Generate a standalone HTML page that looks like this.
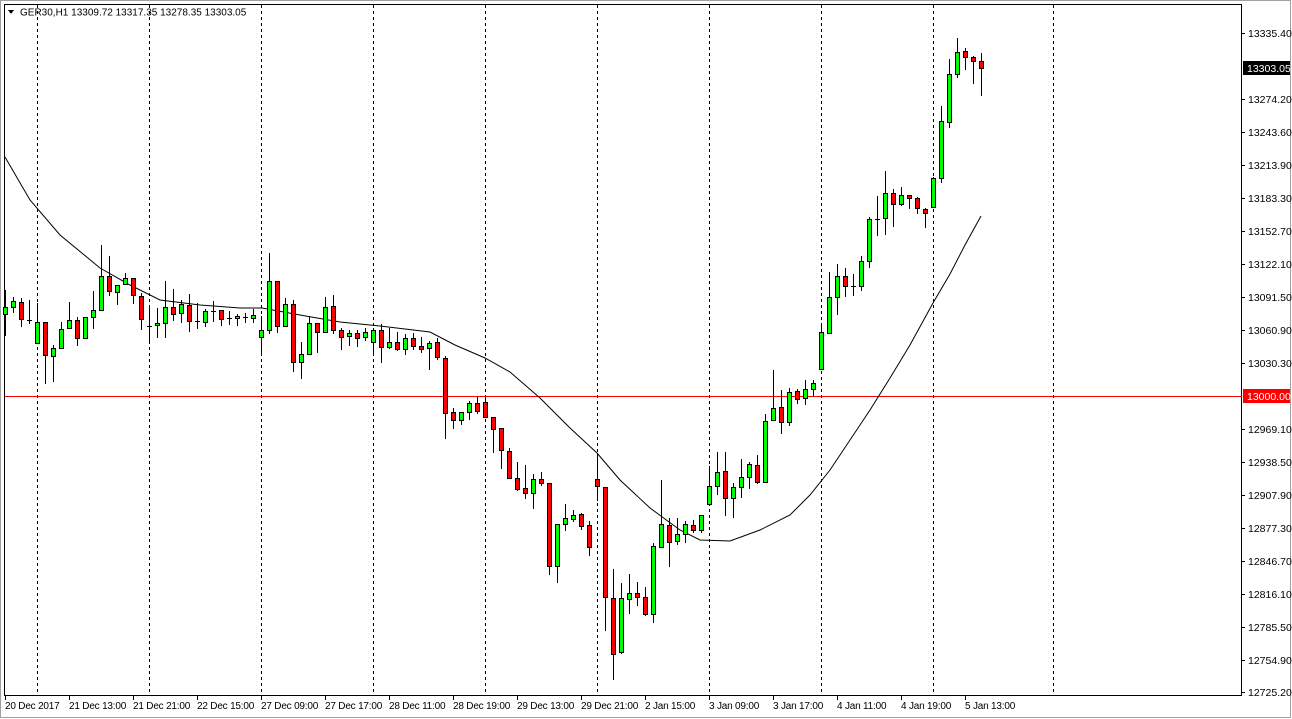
<!DOCTYPE html>
<html><head><meta charset="utf-8"><style>
html,body{margin:0;padding:0;background:#fff;width:1292px;height:719px;overflow:hidden}
svg{display:block}
text{font-family:"Liberation Sans",sans-serif;font-size:10.5px;fill:#000}
.t text{font-size:10px;letter-spacing:-0.2px}
</style></head><body>
<svg id="s" width="1292" height="719" viewBox="0 0 1292 719" xmlns="http://www.w3.org/2000/svg" shape-rendering="crispEdges">
<rect x="0" y="0" width="1292" height="719" fill="#fff"/>
<rect x="0.5" y="0.5" width="1290" height="717" fill="none" stroke="#a0a0a0"/>
<rect x="4.5" y="4.5" width="1237" height="691" fill="none" stroke="#000"/>
<g stroke="#000" stroke-dasharray="3,3">
<line x1="37.5" y1="5" x2="37.5" y2="695"/><line x1="149.5" y1="5" x2="149.5" y2="695"/>
<line x1="261.5" y1="5" x2="261.5" y2="695"/><line x1="373.5" y1="5" x2="373.5" y2="695"/>
<line x1="485.5" y1="5" x2="485.5" y2="695"/><line x1="597.5" y1="5" x2="597.5" y2="695"/>
<line x1="709.5" y1="5" x2="709.5" y2="695"/><line x1="821.5" y1="5" x2="821.5" y2="695"/>
<line x1="933.5" y1="5" x2="933.5" y2="695"/><line x1="1053.5" y1="5" x2="1053.5" y2="695"/>
</g>
<line x1="5" y1="396.5" x2="1242" y2="396.5" stroke="#ff0000"/>
<polyline fill="none" stroke="#000" stroke-width="1" shape-rendering="auto" points="5,157 30,200 60,235 100,268 130,285 160,300 200,305 240,308 262,308 300,315 340,322 380,326 430,332 455,345 485,358 510,372 540,398 570,428 597,453 620,480 650,508 680,530 700,540 730,541 760,530 790,515 810,495 830,470 850,440 870,410 890,378 910,345 933,303 950,274 965,245 981,216"/>
<g id="c"></g>
<g stroke="#000">
<line x1="1242" y1="33.5" x2="1245" y2="33.5"/><line x1="1242" y1="99.5" x2="1245" y2="99.5"/><line x1="1242" y1="132.5" x2="1245" y2="132.5"/><line x1="1242" y1="165.5" x2="1245" y2="165.5"/><line x1="1242" y1="198.5" x2="1245" y2="198.5"/><line x1="1242" y1="231.5" x2="1245" y2="231.5"/><line x1="1242" y1="264.5" x2="1245" y2="264.5"/><line x1="1242" y1="297.5" x2="1245" y2="297.5"/><line x1="1242" y1="330.5" x2="1245" y2="330.5"/><line x1="1242" y1="363.5" x2="1245" y2="363.5"/><line x1="1242" y1="429.5" x2="1245" y2="429.5"/><line x1="1242" y1="462.5" x2="1245" y2="462.5"/><line x1="1242" y1="495.5" x2="1245" y2="495.5"/><line x1="1242" y1="528.5" x2="1245" y2="528.5"/><line x1="1242" y1="561.5" x2="1245" y2="561.5"/><line x1="1242" y1="594.5" x2="1245" y2="594.5"/><line x1="1242" y1="627.5" x2="1245" y2="627.5"/><line x1="1242" y1="660.5" x2="1245" y2="660.5"/><line x1="1242" y1="692.5" x2="1245" y2="692.5"/>
</g>
<g>
<text x="1248" y="37">13335.40</text><text x="1248" y="103">13274.20</text><text x="1248" y="136">13243.60</text><text x="1248" y="169">13213.90</text><text x="1248" y="202">13183.30</text><text x="1248" y="235">13152.70</text><text x="1248" y="268">13122.10</text><text x="1248" y="301">13091.50</text><text x="1248" y="334">13060.90</text><text x="1248" y="367">13030.30</text><text x="1248" y="433">12969.10</text><text x="1248" y="466">12938.50</text><text x="1248" y="499">12907.90</text><text x="1248" y="532">12877.30</text><text x="1248" y="565">12846.70</text><text x="1248" y="598">12816.10</text><text x="1248" y="631">12785.50</text><text x="1248" y="664">12754.90</text><text x="1248" y="696">12725.20</text>
</g>
<rect x="1243" y="61" width="47" height="14" fill="#000"/>
<text x="1247" y="72" style="fill:#fff">13303.05</text>
<rect x="1243" y="389" width="47" height="14" fill="#ff0000"/>
<text x="1247" y="400" style="fill:#fff">13000.00</text>
<g stroke="#000" id="tk"></g>
<g class="t">
<text x="5" y="709">20 Dec 2017</text><text x="69" y="709">21 Dec 13:00</text><text x="133" y="709">21 Dec 21:00</text><text x="197" y="709">22 Dec 15:00</text><text x="261" y="709">27 Dec 09:00</text><text x="325" y="709">27 Dec 17:00</text><text x="389" y="709">28 Dec 11:00</text><text x="453" y="709">28 Dec 19:00</text><text x="517" y="709">29 Dec 13:00</text><text x="581" y="709">29 Dec 21:00</text><text x="645" y="709">2 Jan 15:00</text><text x="709" y="709">3 Jan 09:00</text><text x="773" y="709">3 Jan 17:00</text><text x="837" y="709">4 Jan 11:00</text><text x="901" y="709">4 Jan 19:00</text><text x="965" y="709">5 Jan 13:00</text>
</g>
<path d="M8 10 L14 10 L11 14 Z" fill="#000"/>
<text x="20" y="15.5" style="font-size:10px">GER30,H1  13309.72 13317.35 13278.35 13303.05</text>
</svg>
<script>
var D="g307,314,290,335|g301,307,297,312|r302,319,298,326|d320,320,300,323|g322,343,303,343|r322,355,322,383|g348,356,345,381|g329,348,322,348|g320,328,302,328|r320,338,317,345|g317,338,317,338|g310,317,291,328|g276,310,245,310|r276,291,256,295|g285,292,285,304|g278,284,273,284|r278,295,278,303|r296,319,293,329|d326,326,308,343|g323,325,308,337|g307,323,281,337|r307,314,289,320|g304,313,300,322|r305,321,294,331|d321,321,303,328|g311,322,309,326|d311,311,301,321|r310,319,310,325|d318,318,311,324|g316,318,314,325|d317,317,313,322|g315,318,309,322|g330,337,316,353|g281,330,253,333|r281,326,281,332|g304,326,298,326|r304,362,300,371|g354,362,342,378|g323,354,316,354|r323,332,323,352|g307,332,297,332|r306,330,295,333|r330,337,328,349|g333,336,330,345|r333,338,330,346|g332,337,328,340|g330,342,328,353|r330,347,324,362|g342,347,328,348|r342,349,332,350|g338,349,334,354|r338,346,333,349|r346,349,337,352|g343,348,341,369|r342,357,338,359|r358,413,356,438|r412,420,408,428|g412,420,412,424|g403,412,401,419|r403,411,397,413|r402,417,397,417|r417,429,417,452|r428,450,428,468|r451,478,448,478|r478,489,462,490|r488,493,465,498|g479,493,474,508|r479,483,472,485|r483,566,483,574|g524,566,524,582|g518,524,504,530|g515,519,510,521|r514,526,513,529|r525,547,521,555|r479,486,453,500|r487,597,487,630|r598,654,569,679|g598,652,583,653|g593,599,574,613|r593,597,582,605|r597,614,587,615|g546,614,543,622|g524,547,480,547|r525,542,518,566|g534,541,518,544|g524,534,521,542|r525,530,520,532|g515,530,515,532|g486,504,466,504|g472,486,452,494|r471,498,452,515|g487,498,483,517|g477,487,459,497|g464,477,462,488|r465,482,455,483|g421,482,414,482|g408,420,370,420|r407,422,390,433|g392,422,388,425|r391,399,389,403|g389,398,380,404|g383,389,380,395|g332,369,325,369|g297,333,272,333|g276,297,264,314|r276,286,268,296|d286,286,274,295|g261,286,256,290|g219,261,217,267|d219,219,196,235|g193,218,171,234|r193,204,189,226|g195,204,187,205|r195,198,195,208|r198,208,197,213|r209,213,208,227|g178,207,177,207|g121,178,106,182|g74,122,59,127|g52,74,38,77|r51,57,48,69|r57,61,56,83|r61,68,53,95";
var g=document.getElementById("c"),h="";
D.split("|").forEach(function(s,k){var t=s[0],a=s.slice(1).split(",").map(Number),x=5+8*k;
h+='<line x1="'+(x+0.5)+'" y1="'+a[2]+'" x2="'+(x+0.5)+'" y2="'+(a[3]+1)+'" stroke="#000"/>';
if(t=="d"||a[1]-a[0]<1){h+='<line x1="'+(x-2)+'" y1="'+(a[0]+0.5)+'" x2="'+(x+3)+'" y2="'+(a[0]+0.5)+'" stroke="#000"/>';}
else h+='<rect x="'+(x-1.5)+'" y="'+(a[0]+0.5)+'" width="4" height="'+(a[1]-a[0])+'" fill="'+(t=="g"?"#00ff00":"#ff0000")+'" stroke="#000"/>';});
g.innerHTML=h;
var tk="";for(var i=0;i<16;i++){var x=5.5+64*i;tk+='<line x1="'+x+'" y1="696" x2="'+x+'" y2="700"/>';}
document.getElementById("tk").innerHTML=tk;
</script>
</body></html>
